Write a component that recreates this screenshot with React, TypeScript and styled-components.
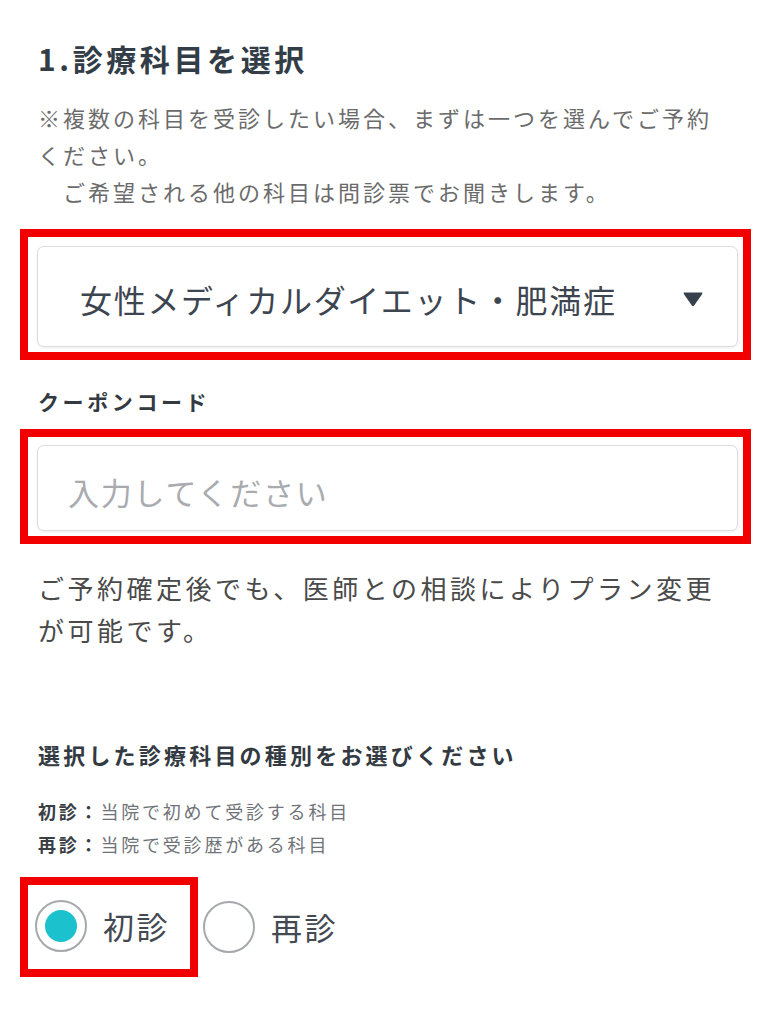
import React, { useState } from "react";
import styled, { createGlobalStyle } from "styled-components";

const GlobalStyle = createGlobalStyle`
  html, body { margin: 0; padding: 0; background: #ffffff; }
  body { font-family: "Noto Sans CJK JP", "Noto Sans", sans-serif; }
  * { box-sizing: border-box; }
`;

const Page = styled.div`
  width: 771px;
  min-height: 1024px;
  padding: 38px 33px 0 37px;
  display: flex;
  flex-direction: column;
  align-items: stretch;
`;

const Heading = styled.h2`
  margin: 0 0 0 1px;
  font-size: 30px;
  line-height: 40px;
  font-weight: 700;
  letter-spacing: 3.6px;
  color: #333d47;
`;

const Note = styled.p`
  margin: 21px 0 0 1px;
  font-size: 22px;
  line-height: 37px;
  letter-spacing: 3px;
  color: #6b6b6b;
  white-space: pre;
`;

const Highlight = styled.div<{ $pad: string; $inline?: boolean }>`
  border: 8px solid #f20000;
  padding: ${(p) => p.$pad};
  margin-left: -17px;
  margin-right: ${(p) => (p.$inline ? "0" : "-13px")};
  align-self: ${(p) => (p.$inline ? "flex-start" : "stretch")};
`;

const FieldBox = styled.div<{ $h: number }>`
  height: ${(p) => p.$h}px;
  border: 1px solid #dcdde0;
  border-radius: 7px;
  background: #ffffff;
  box-shadow: 0 1px 3px rgba(0, 0, 0, 0.08);
  display: flex;
  align-items: center;
`;

const SelectBox = styled(FieldBox)`
  justify-content: space-between;
  padding: 4px 33px 0 42px;
`;

const SelectText = styled.span`
  font-size: 32px;
  letter-spacing: 1.7px;
  color: #3d4550;
  white-space: nowrap;
`;

const TextInput = styled.input`
  width: 100%;
  height: 100%;
  border: none;
  outline: none;
  background: transparent;
  padding: 6px 0 0 30px;
  font-family: "Noto Sans CJK JP", "Noto Sans", sans-serif;
  font-size: 31px;
  letter-spacing: 1.8px;
  color: #333;
  &::placeholder {
    color: #a9abaf;
  }
`;

const Label = styled.div<{ $mt: number; $size: number; $ls: number }>`
  margin: ${(p) => p.$mt}px 0 0 1px;
  font-size: ${(p) => p.$size}px;
  letter-spacing: ${(p) => p.$ls}px;
  line-height: 30px;
  font-weight: 700;
  color: #333a42;
  white-space: nowrap;
`;

const Body = styled.p`
  margin: 23px 0 0 1px;
  font-size: 26px;
  line-height: 42px;
  letter-spacing: 3.5px;
  color: #4a4a4a;
  white-space: nowrap;
`;

const Legend = styled.div`
  margin: 26px 0 0 1px;
  font-size: 18px;
  line-height: 33px;
  letter-spacing: 2.8px;
  color: #6f7378;
`;

const LegendKey = styled.b`
  color: #3a3f45;
  font-weight: 700;
`;

const RadioRow = styled.div`
  margin-top: 16px;
  display: flex;
  align-items: center;
  gap: 5px;
`;

const RadioOption = styled.label`
  display: flex;
  align-items: center;
  gap: 16px;
  cursor: pointer;
`;

const RadioCircle = styled.span<{ $checked: boolean }>`
  width: 52px;
  height: 52px;
  border-radius: 50%;
  border: 2px solid #a6a8ab;
  background: #ffffff;
  display: flex;
  align-items: center;
  justify-content: center;
  flex-shrink: 0;
  &::after {
    content: "";
    width: 32px;
    height: 32px;
    border-radius: 50%;
    background: ${(p) => (p.$checked ? "#1bc1cd" : "transparent")};
  }
`;

const RadioText = styled.span`
  font-size: 31px;
  letter-spacing: 2.5px;
  color: #444a52;
  line-height: 52px;
`;

const Arrow = () => (
  <svg width="22" height="16" viewBox="0 0 22 16" aria-hidden="true">
    <path d="M2.5 1.5 H19.5 Q21 1.5 20.2 2.9 L12.3 14.3 Q11 16 9.7 14.3 L1.8 2.9 Q1 1.5 2.5 1.5 Z" fill="#37414d" />
  </svg>
);

export default function App() {
  const [kind, setKind] = useState<"first" | "repeat">("first");
  return (
    <>
      <GlobalStyle />
      <Page>
        <Heading>1.診療科目を選択</Heading>
        <Note>
          {"※複数の科目を受診したい場合、まずは一つを選んでご予約\nください。\n\u3000ご希望される他の科目は問診票でお聞きします。"}
        </Note>

        <Highlight $pad="9px 5px 5px 9px" style={{ marginTop: 19 }}>
          <SelectBox $h={101}>
            <SelectText>女性メディカルダイエット・肥満症</SelectText>
            <Arrow />
          </SelectBox>
        </Highlight>

        <Label $mt={26} $size={21} $ls={3.6}>
          クーポンコード
        </Label>

        <Highlight $pad="8px 5px 5px 9px" style={{ marginTop: 13 }}>
          <FieldBox $h={86}>
            <TextInput placeholder="入力してください" />
          </FieldBox>
        </Highlight>

        <Body>
          ご予約確定後でも、医師との相談によりプラン変更
          <br />
          が可能です。
        </Body>

        <Label $mt={88} $size={22} $ls={3.2}>
          選択した診療科目の種別をお選びください
        </Label>

        <Legend>
          <LegendKey>初診：</LegendKey>当院で初めて受診する科目
          <br />
          <LegendKey>再診：</LegendKey>当院で受診歴がある科目
        </Legend>

        <RadioRow>
          <Highlight $pad="15px 20px 17px 7px" $inline>
            <RadioOption onClick={() => setKind("first")}>
              <RadioCircle $checked={kind === "first"} />
              <RadioText>初診</RadioText>
            </RadioOption>
          </Highlight>
          <RadioOption onClick={() => setKind("repeat")}>
            <RadioCircle $checked={kind === "repeat"} />
            <RadioText>再診</RadioText>
          </RadioOption>
        </RadioRow>
      </Page>
    </>
  );
}
